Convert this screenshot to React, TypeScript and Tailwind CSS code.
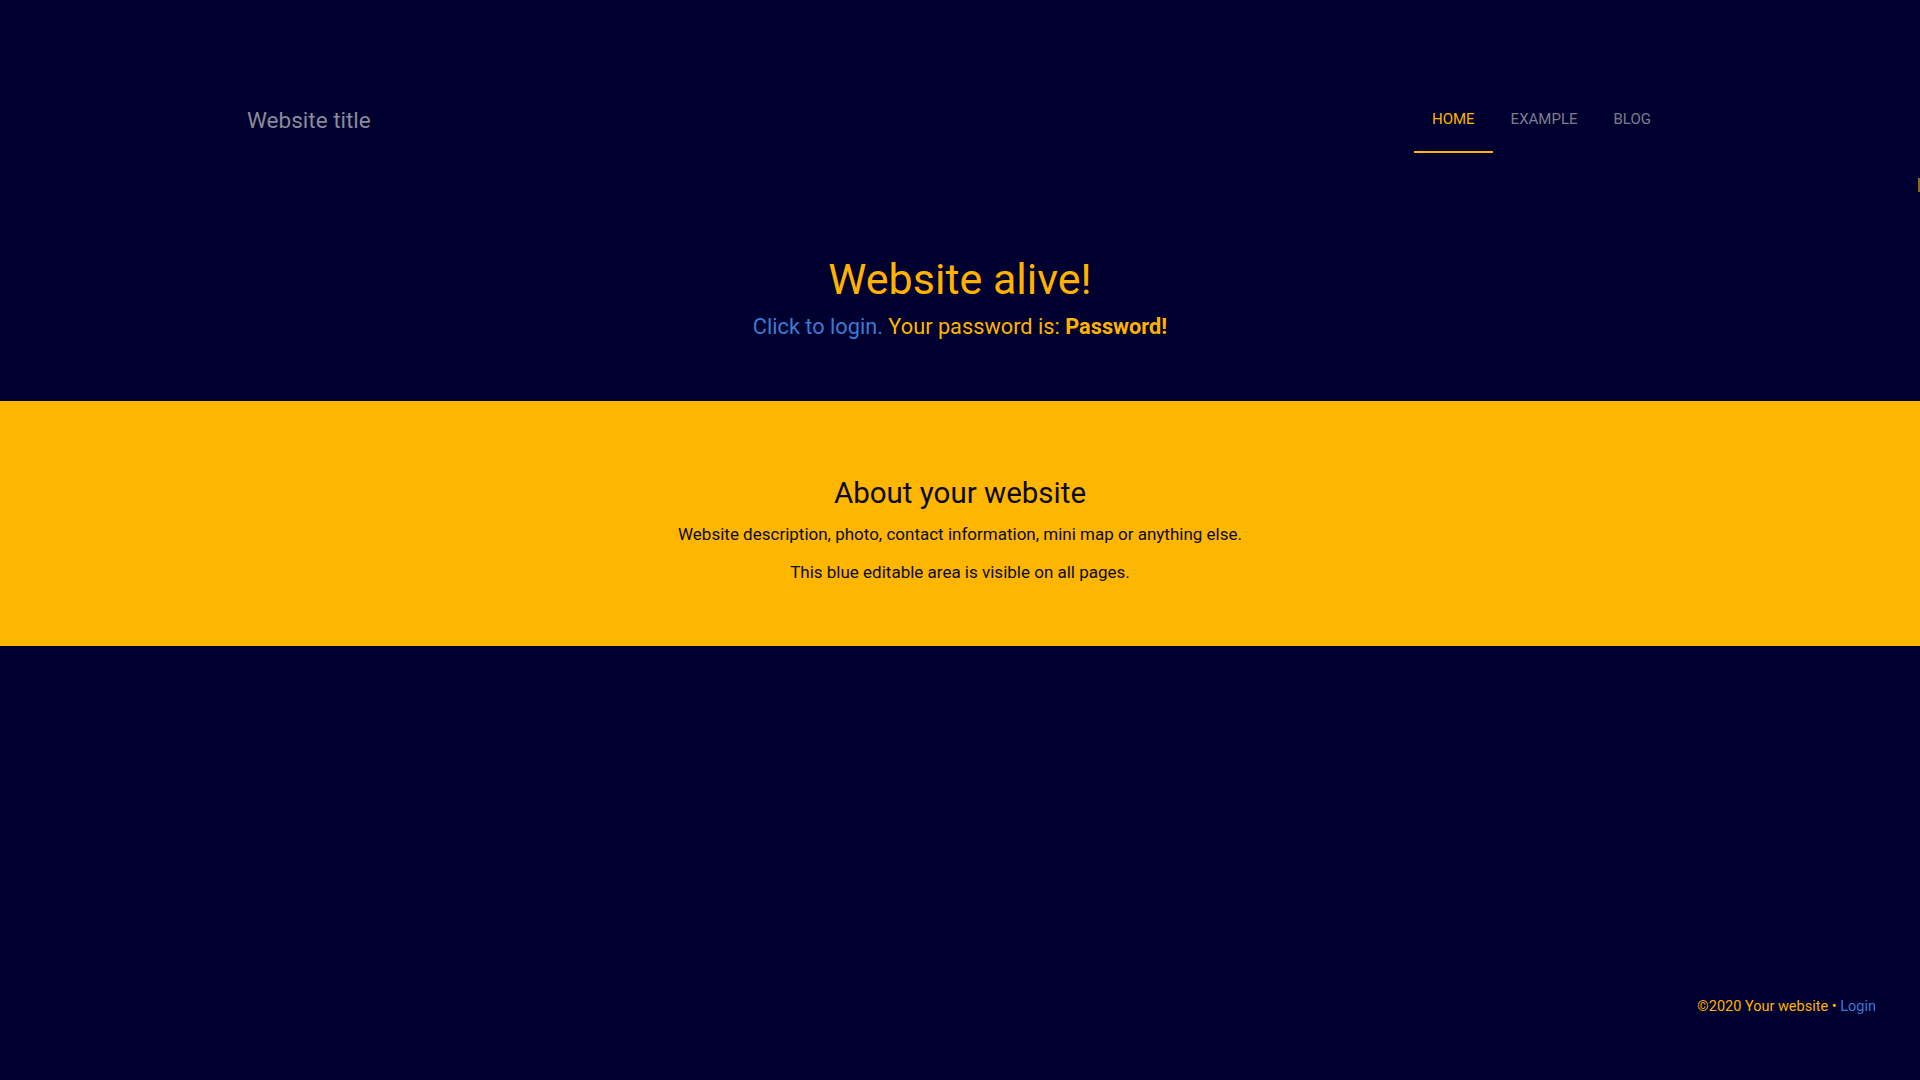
import React from "react";

const navLinks = [
  { label: "HOME", active: true },
  { label: "EXAMPLE", active: false },
  { label: "BLOG", active: false },
];

export default function App() {
  return (
    <div
      className="relative min-h-screen flex flex-col bg-[#000030] overflow-hidden"
      style={{ fontFamily: "Roboto, 'Liberation Sans', sans-serif" }}
    >
      {/* Header */}
      <header className="flex items-center justify-between pt-[87px] pl-[247px] pr-[251px]">
        <a className="text-[22.5px] leading-7 text-[#8a8a98]">Website title</a>
        <nav className="flex">
          {navLinks.map((link) => (
            <a
              key={link.label}
              className={
                link.active
                  ? "px-[18px] pt-[22px] pb-[22px] text-[15px] leading-5 text-[#ffb300] border-b-2 border-[#ffb300]"
                  : "px-[18px] pt-[22px] pb-[22px] text-[15px] leading-5 text-[#7d7d8c] border-b-2 border-transparent"
              }
            >
              {link.label}
            </a>
          ))}
        </nav>
      </header>

      {/* tiny edge marker on the right */}
      <div className="absolute right-0 top-[178px] w-[2px] h-[14px] bg-[#8a6a10]" />

      {/* Hero */}
      <section className="flex flex-col items-center pt-[101px] pb-[60px]">
        <h1 className="text-[43px] leading-[50px] text-[#ffb300]">Website alive!</h1>
        <p className="mt-[9px] text-[21.75px] leading-7 text-[#ffb300]">
          <a className="text-[#3b7bd4]">Click to login.</a> Your password is:{" "}
          <span className="font-bold">Password!</span>
        </p>
      </section>

      {/* About band */}
      <section className="bg-[#ffb600] flex flex-col items-center pt-[75px] pb-[62px] text-[#0a0a1e]">
        <h2 className="text-[29.5px] leading-[34px]">About your website</h2>
        <p className="mt-[12px] text-[17px] leading-6">
          Website description, photo, contact information, mini map or anything else.
        </p>
        <p className="mt-[14px] text-[17px] leading-6">This blue editable area is visible on all pages.</p>
      </section>

      <div className="flex-1" />

      {/* Footer */}
      <footer className="flex justify-end pr-[44px] pb-[63px]">
        <p className="text-[14.5px] leading-5 text-[#ffb300]">
          ©2020 Your website • <a className="text-[#3b7bd4]">Login</a>
        </p>
      </footer>
    </div>
  );
}
